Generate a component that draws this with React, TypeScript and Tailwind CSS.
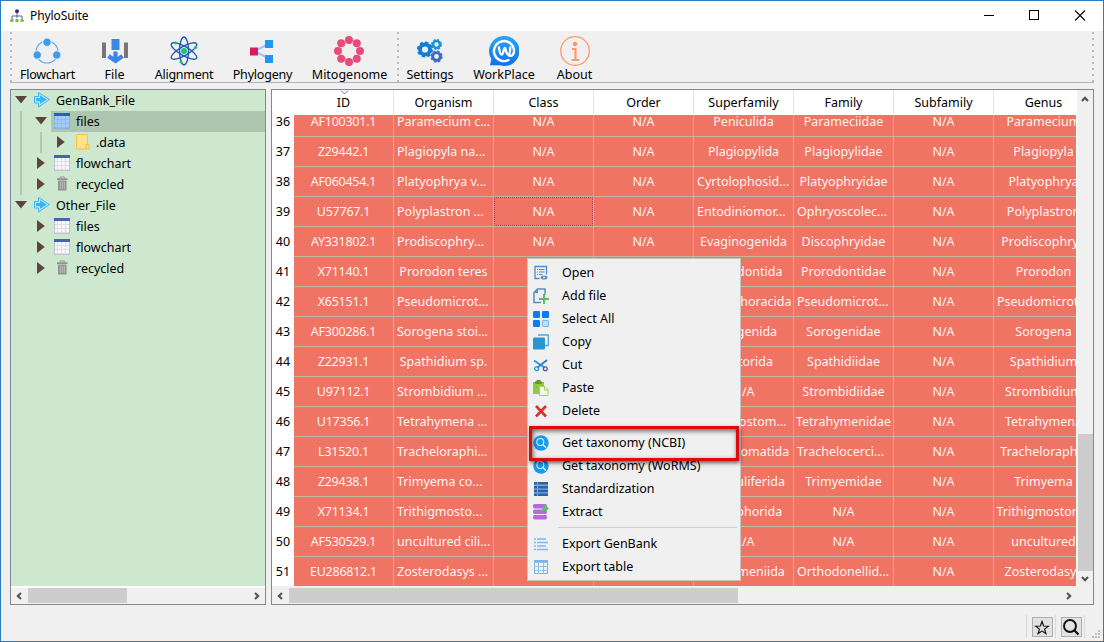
import React from "react";

type IconProps = { children: React.ReactNode; size?: string; box?: string };

function Icon({ children, size = "h-4 w-4", box = "0 0 16 16" }: IconProps) {
  return (
    <svg viewBox={box} className={`${size} shrink-0`} fill="none">
      {children}
    </svg>
  );
}

/* ---------- title bar ---------- */

function TitleBar() {
  return (
    <header className="flex h-[30px] shrink-0 items-center bg-white pl-[9px] text-[12px]">
      <svg viewBox="0 0 14 14" className="h-3.5 w-3.5" fill="none">
        <path d="M7 3v6M2 10V7h10v3" stroke="#66609a" strokeWidth="1" />
        <circle cx="7" cy="2.2" r="2" fill="#37317a" />
        <g fill="#79b94c">
          <circle cx="1.9" cy="11.5" r="1.8" />
          <circle cx="7" cy="11.5" r="1.8" />
          <circle cx="12.1" cy="11.5" r="1.8" />
        </g>
      </svg>
      <span className="ml-[6px] tracking-[-0.1px]">PhyloSuite</span>
      <div className="ml-auto flex items-center gap-[35px] pb-px pr-[17px]">
        <svg className="-mr-px h-[11px] w-[11px]" shapeRendering="crispEdges">
          <path d="M0 5.5h10" stroke="#000" />
        </svg>
        <svg className="h-[11px] w-[11px]" shapeRendering="crispEdges">
          <rect x=".5" y=".5" width="9" height="9" fill="none" stroke="#000" />
        </svg>
        <svg className="h-[11px] w-[11px]">
          <path d="M0 .5l10 10M10 .5l-10 10" stroke="#000" strokeWidth="1.1" />
        </svg>
      </div>
    </header>
  );
}

/* ---------- toolbar icons ---------- */

const flowchartIcon = (
  <Icon size="h-[30px] w-[30px]" box="0 0 30 30">
    <circle cx="15" cy="16" r="11" stroke="#5aabe8" strokeWidth="1.1" />
    <g fill="#3f9ceb" stroke="#f0f0f0" strokeWidth="1">
      <circle cx="15" cy="6.2" r="4.2" />
      <circle cx="5.2" cy="19" r="4.2" />
      <circle cx="24.8" cy="19" r="4.2" />
    </g>
  </Icon>
);

const fileIcon = (
  <Icon size="h-[30px] w-[30px]" box="0 0 30 30">
    <path d="M3 6.500h4v15.500h-4zM25 6.500h4v15.500h-4z" fill="#777" />
    <path d="M12.500 3h8v11h-8z" fill="#3d86e6" />
    <path d="M9.500 20L16.500 25L23.500 20M16.500 15.500v9" stroke="#3d86e6" strokeWidth="4.200" />
  </Icon>
);

const alignmentIcon = (
  <Icon size="h-[30px] w-[30px]" box="0 0 30 30">
    <g stroke="#2159b8" strokeWidth="1.4">
      <ellipse cx="15" cy="15" rx="4.500" ry="14" />
      <ellipse cx="15" cy="15" rx="4.500" ry="14.500" transform="rotate(60 15 15)" />
      <ellipse cx="15" cy="15" rx="4.500" ry="14.500" transform="rotate(-60 15 15)" />
    </g>
    <g fill="#19c37d">
      <circle cx="15" cy="15" r="3" />
      <circle cx="6.5" cy="6.8" r="1.6" />
      <circle cx="26.500" cy="11.500" r="1.600" />
      <circle cx="12" cy="25.800" r="1.600" />
    </g>
  </Icon>
);

const phylogenyIcon = (
  <Icon size="h-[30px] w-[30px]" box="0 0 30 30">
    <path d="M22 8L7 15l15 7.500" stroke="#90caf9" strokeWidth="2" />
    <path d="M3 11.500h8v8h-8z" fill="#d81b60" />
    <path d="M18 4h8v8h-8zM18 19h8v8h-8z" fill="#2196f3" />
  </Icon>
);

const beads = [[15, 4], [22.800, 7.200], [26, 15], [22.800, 22.800], [15, 26], [7.200, 22.800], [4, 15], [7.200, 7.200]];

const mitogenomeIcon = (
  <Icon size="h-[30px] w-[30px]" box="0 0 30 30">
    {beads.map(([x, y]) => (
      <circle key={`${x}-${y}`} cx={x} cy={y} r="4" fill="#e84a7a" />
    ))}
  </Icon>
);

function Gear({ x, y, r, color }: { x: number; y: number; r: number; color: string }) {
  return (
    <g transform={`translate(${x} ${y})`}>
      <circle r={r * 0.66} stroke={color} strokeWidth={r * 0.5} />
      <circle r={r * 0.94} stroke={color} strokeWidth={r * 0.24} strokeDasharray={`${r * 0.42} ${r * 0.318}`} />
    </g>
  );
}

const settingsIcon = (
  <Icon size="h-[30px] w-[30px]" box="0 0 30 30">
    <Gear x={10} y={13.5} r={7.6} color="#0e7ddb" />
    <Gear x={21.500} y={8.500} r={5.200} color="#1795d8" />
    <Gear x={21.500} y={20.500} r={5.800} color="#4268c0" />
  </Icon>
);

const workplaceIcon = (
  <Icon size="h-[30px] w-[30px]" box="0 0 30 30">
    <defs>
      <linearGradient id="wp" x1="0" y1="0" x2="0" y2="1">
        <stop stopColor="#29a6f5" />
        <stop offset="1" stopColor="#1070ec" />
      </linearGradient>
    </defs>
    <path d="M15 0a15 15 0 1 1-4 29.300L1 29.300l1.300-6.500A15 15 0 0 1 15 0z" fill="url(#wp)" />
    <path
      d="M19.500 24A10 10 0 1 1 25 15c0 5-4.200 6-6 3.300M10 11.500c.4 4 1.300 7 2.700 7 1.800 0 2-6.500 3.100-6.500s1.300 6.500 3.400 6.500c1.500 0 2-3 2-7"
      stroke="#fff"
      strokeWidth="2.400"
      strokeLinecap="round"
    />
  </Icon>
);

const aboutIcon = (
  <Icon size="h-[30px] w-[30px]" box="0 0 30 30">
    <circle cx="15" cy="15" r="14.300" stroke="#ff9868" strokeWidth="1.300" />
    <circle cx="15" cy="8" r="2.300" fill="#ff9868" />
    <path d="M12 13h3.500v10.500M11.500 24h7.500" stroke="#ff9868" strokeWidth="2.100" />
  </Icon>
);

const mainTools = [
  { label: "Flowchart", icon: flowchartIcon, width: "w-[66px]", text: "ml-px tracking-[-0.25px]" },
  { label: "File", icon: fileIcon, width: "w-[68px]", text: "ml-px" },
  { label: "Alignment", icon: alignmentIcon, width: "w-[72px]", text: "tracking-[-0.25px]" },
  { label: "Phylogeny", icon: phylogenyIcon, width: "w-[84px]", text: "ml-px tracking-[-0.2px]" },
  { label: "Mitogenome", icon: mitogenomeIcon, width: "w-[90px]", text: "ml-px" },
];

const sideTools = [
  { label: "Settings", icon: settingsIcon, width: "w-[64px]", text: "tracking-[-0.1px]" },
  { label: "WorkPlace", icon: workplaceIcon, width: "w-[84px]", text: "" },
  { label: "About", icon: aboutIcon, width: "w-[57px]", text: "" },
];

function ToolButton({ label, icon, width, text }: (typeof mainTools)[number]) {
  return (
    <button className={`flex shrink-0 flex-col items-center pt-[5px] ${width}`}>
      {icon}
      <span className={`mt-[1px] h-4 whitespace-nowrap leading-4 ${text}`}>{label}</span>
    </button>
  );
}

function Grip() {
  return (
    <svg className="h-[51px] w-0.5 shrink-0" shapeRendering="crispEdges">
      <path d="M1 1v50" stroke="#b9b9b9" strokeWidth="2" strokeDasharray="2 4" />
    </svg>
  );
}

function Toolbar() {
  return (
    <nav className="ml-[9px] mr-[9px] flex h-[52px] shrink-0 border-b border-[#b4b4b4]">
      <Grip />
      <div className="ml-0.5 flex">{mainTools.map((t) => <ToolButton key={t.label} {...t} />)}</div>
      <div className="ml-[3px] flex"><Grip /></div>
      <div className="-ml-px flex">{sideTools.map((t) => <ToolButton key={t.label} {...t} />)}</div>
      <div className="ml-auto flex"><Grip /></div>
    </nav>
  );
}

/* ---------- scroll bars ---------- */

function Arrow({ turn = "" }: { turn?: string }) {
  return (
    <svg viewBox="0 0 8 8" className={`h-2 w-2 shrink-0 ${turn}`} fill="none">
      <path d="M1 6l3-3.200L7 6" stroke="#505050" strokeWidth="2" />
    </svg>
  );
}

function HScroll({ thumb }: { thumb: string }) {
  return (
    <div className="mt-0.5 flex h-4 shrink-0 items-center bg-[#f0f0f0] pb-px">
      <div className="flex w-[17px] pl-[4px]"><Arrow turn="-rotate-90" /></div>
      <div className={`h-[15px] bg-[#cdcdcd] ${thumb}`} />
      <div className="ml-auto flex w-[17px] pl-[5px]"><Arrow turn="rotate-90" /></div>
    </div>
  );
}

/* ---------- tree ---------- */

const projectIcon = (
  <Icon>
    <path d="M.500 4.500h4v-4L15.500 7.500 4.500 15v-4h-4z" fill="#bfe8fb" stroke="#3fb2f4" strokeWidth="1" strokeLinejoin="round" />
    <path d="M2 6h4V3.300l6.800 4.200L6 12V9.300H2z" fill="#35b5fb" />
  </Icon>
);

function SheetIcon({ active = false }: { active?: boolean }) {
  return (
    <svg viewBox="0 0 16 16" className="h-4 w-4 shrink-0" shapeRendering="crispEdges" fill="none">
      <path d="M0 0h16v16H0z" fill={active ? "#a5ccf4" : "#f7f7fa"} />
      <path d="M3.500 3v12M7.500 3v12M11.500 3v12M1 6.500h14M1 10.500h14M1 14.500h14" stroke={active ? "#8dbdeb" : "#dfdde8"} />
      <path d="M.5 3v12.500h15V3" stroke={active ? "#80b2e4" : "#c3c1d0"} />
      <path d="M0 0h16v2.500H0z" fill={active ? "#2561b0" : "#4267ad"} />
    </svg>
  );
}

const folderIcon = (
  <Icon>
    <path d="M2.500.5h11v10h1.500v4.500H2.500z" fill="#ffe28c" stroke="#f0c34c" />
    <path d="M12 15v-4.500h1.500" stroke="#e9b93f" />
  </Icon>
);

const trashIcon = (
  <Icon>
    <path d="M6 2V1h4.500v1" stroke="#9b9b9b" />
    <path d="M3 2.300h10.500v1.700H3zM4 4.500h8.500V14.500H4z" fill="#929292" />
    <path d="M6.300 5.500v7.500M8.300 5.500v7.500M10.300 5.500v7.500" stroke="#c4cbc4" strokeWidth=".8" />
  </Icon>
);

type Node = { label: string; icon: React.ReactNode; indent: string; open?: boolean; selected?: boolean };

const nodes: Node[] = [
  { label: "GenBank_File", icon: projectIcon, indent: "", open: true },
  { label: "files", icon: <SheetIcon active />, indent: "pl-5", open: true, selected: true },
  { label: ".data", icon: folderIcon, indent: "pl-10" },
  { label: "flowchart", icon: <SheetIcon />, indent: "pl-5" },
  { label: "recycled", icon: trashIcon, indent: "pl-5" },
  { label: "Other_File", icon: projectIcon, indent: "", open: true },
  { label: "files", icon: <SheetIcon />, indent: "pl-5" },
  { label: "flowchart", icon: <SheetIcon />, indent: "pl-5" },
  { label: "recycled", icon: trashIcon, indent: "pl-5" },
];

function TreeRow({ label, icon, indent, open, selected }: Node) {
  return (
    <div className={`flex h-[21px] ${indent}`}>
      <div className="flex w-5 shrink-0 items-start justify-center pt-1">
        <svg viewBox="0 0 12 12" className="h-3 w-3">
          <path d={open ? "M0 2h12L6 9.500z" : "M2 0v12L9.800 6z"} fill="#5d4440" />
        </svg>
      </div>
      <div className={`flex flex-1 items-start pl-[3px] pt-[2px] ${selected ? "bg-[#aec5b0]" : ""}`}>
        {icon}
        <span className="ml-[6px] whitespace-nowrap leading-[17px]">{label}</span>
      </div>
    </div>
  );
}

function Tree() {
  return (
    <aside className="relative flex w-[256px] shrink-0 flex-col border border-[#828790] bg-white">
      <div className="flex-1 bg-[#cde8cf]">
        {nodes.map((n, i) => <TreeRow key={i} {...n} />)}
      </div>
      <div className="absolute left-[9px] top-[21px] h-[84px] w-0.5 bg-[#afc6b1]" />
      <div className="absolute left-[29px] top-[42px] h-[21px] w-0.5 bg-[#afc6b1]" />
      <HScroll thumb="w-[99px]" />
    </aside>
  );
}

/* ---------- table ---------- */

const columns = ["ID", "Organism", "Class", "Order", "Superfamily", "Family", "Subfamily", "Genus"];

const NA = "N/A";
const rows: string[][] = [
  ["AF100301.1", "Paramecium c...", NA, NA, "Peniculida", "Parameciidae", NA, "Paramecium"],
  ["Z29442.1", "Plagiopyla na...", NA, NA, "Plagiopylida", "Plagiopylidae", NA, "Plagiopyla"],
  ["AF060454.1", "Platyophrya v...", NA, NA, "Cyrtolophosid...", "Platyophryidae", NA, "Platyophrya"],
  ["U57767.1", "Polyplastron ...", NA, NA, "Entodiniomor...", "Ophryoscolec...", NA, "Polyplastron"],
  ["AY331802.1", "Prodiscophry...", NA, NA, "Evaginogenida", "Discophryidae", NA, "Prodiscophrya"],
  ["X71140.1", "Prorodon teres", NA, NA, "Prorodontida", "Prorodontidae", NA, "Prorodon"],
  ["X65151.1", "Pseudomicrot...", NA, NA, "Odontohoracida", "Pseudomicrot...", NA, "Pseudomicrot..."],
  ["AF300286.1", "Sorogena stoi...", NA, NA, "Sorogenida", "Sorogenidae", NA, "Sorogena"],
  ["Z22931.1", "Spathidium sp.", NA, NA, "Haptorida", "Spathidiidae", NA, "Spathidium"],
  ["U97112.1", "Strombidium ...", NA, NA, NA, "Strombidiidae", NA, "Strombidium"],
  ["U17356.1", "Tetrahymena ...", NA, NA, "Hymenostom...", "Tetrahymenidae", NA, "Tetrahymena"],
  ["L31520.1", "Tracheloraphi...", NA, NA, "Protostomatida", "Trachelocerci...", NA, "Tracheloraphis"],
  ["Z29438.1", "Trimyema co...", NA, NA, "Scutisuliferida", "Trimyemidae", NA, "Trimyema"],
  ["X71134.1", "Trithigmosto...", NA, NA, "Cyrtophorida", NA, NA, "Trithigmostoma"],
  ["AF530529.1", "uncultured cili...", NA, NA, NA, NA, NA, "uncultured"],
  ["EU286812.1", "Zosterodasys ...", NA, NA, "Synhymeniida", "Orthodonellid...", NA, "Zosterodasys"],
];

function Cell({ text, col, focused }: { text: string; col: number; focused: boolean }) {
  const elided = text.endsWith("...");
  return (
    <div
      className={`relative flex w-[100px] shrink-0 items-center overflow-hidden whitespace-nowrap border-b border-r border-[#c5b7a5] bg-[#f07464] pt-[2px] ${
        elided ? "justify-start pl-[3px]" : "justify-center"
      } ${col === 0 ? "tracking-[-0.25px]" : ""}`}
    >
      {text}
      {focused && <div className="absolute inset-0 border border-dotted border-[#4d6a68]" />}
    </div>
  );
}

function Table() {
  return (
    <main className="flex w-[823px] shrink-0 flex-col border border-[#828790] bg-white">
      <div className="flex min-h-0 flex-1">
        <div className="flex w-[804px] shrink-0 flex-col overflow-hidden">
          <div className="flex h-[25px] shrink-0 pl-[22px]">
            {columns.map((c, i) => (
              <div key={c} className="relative flex w-[100px] shrink-0 items-center justify-center border-r border-[#e2e2e2] pt-[2px]">
                {i === 0 && (
                  <svg className="absolute left-[46px] top-0 h-[5px] w-[9px]" fill="none">
                    <path d="M1 .5l3.500 3.500L8 .5" stroke="#777" />
                  </svg>
                )}
                {c}
              </div>
            ))}
          </div>
          <div className="-mb-px flex flex-1 flex-col justify-end overflow-hidden">
            {rows.map((r, i) => (
              <div key={r[0]} className="flex h-[30px] shrink-0">
                <div className="flex w-[22px] shrink-0 items-center justify-center pt-px">{36 + i}</div>
                <div className="flex text-[#fdf3f0]">
                  {r.map((t, c) => <Cell key={c} text={t} col={c} focused={i === 3 && c === 2} />)}
                </div>
              </div>
            ))}
          </div>
        </div>
        <div className="-mb-px ml-px flex w-4 flex-col items-center bg-[#f0f0f0]">
          <div className="flex h-[18px] items-center"><Arrow /></div>
          <div className="mt-auto h-[137px] w-[15px] bg-[#cdcdcd]" />
          <div className="flex h-[16px] items-center"><Arrow turn="rotate-180" /></div>
        </div>
      </div>
      <div className="flex bg-[#f0f0f0]">
        <div className="w-[805px] pt-px"><div className="-mt-px"><HScroll thumb="w-[449px]" /></div></div>
      </div>
    </main>
  );
}

/* ---------- context menu ---------- */

const lensIcon = (
  <Icon>
    <circle cx="8" cy="8" r="7.700" fill="#159cf0" />
    <circle cx="7.300" cy="7" r="3.500" stroke="#d8f2ff" strokeWidth="1.100" />
    <path d="M9.800 9.500l3.200 3.200" stroke="#d8f2ff" strokeWidth="1.300" />
  </Icon>
);

type Item = { label: string; icon: React.ReactNode };

const editItems: Item[] = [
  {
    label: "Open",
    icon: (
      <Icon>
        <path d="M6.500 13.500H2v-12h11.500v8" stroke="#4b8bd0" strokeWidth="1.300" />
        <path d="M4 4.500h1M6 4.500h5.500M4 7h1M6 7h5.500M4 9.500h1M6 9.500h3.500" stroke="#4b8bd0" />
        <ellipse cx="11" cy="12.500" rx="3.300" ry="2" fill="#4b8bd0" />
        <circle cx="11" cy="12.500" r="1" fill="#eee" />
      </Icon>
    ),
  },
  {
    label: "Add file",
    icon: (
      <Icon>
        <path d="M8 14.500H1V4.500L4.500 1H12v6" stroke="#5b8cbe" strokeWidth="1.500" />
        <path d="M1 5h4V1z" fill="#5b8cbe" />
        <path d="M11 6v10M6 11h10" stroke="#56bd62" strokeWidth="1.900" />
      </Icon>
    ),
  },
  {
    label: "Select All",
    icon: (
      <Icon>
        <g fill="#0b7cf5">
          <rect width="7" height="7" rx="1.200" />
          <rect x="9" width="7" height="7" rx="1.200" />
          <rect y="9" width="7" height="7" rx="1.200" />
        </g>
        <rect x="9.500" y="9.500" width="6" height="6" rx=".6" fill="#bee0fb" stroke="#75b5ef" />
      </Icon>
    ),
  },
  {
    label: "Copy",
    icon: (
      <Icon>
        <path d="M5 1h10.300v10.500H12" stroke="#51a7d9" strokeWidth="1.300" />
        <rect y="3.500" width="12" height="12" rx="1.200" fill="#2996d3" />
      </Icon>
    ),
  },
  {
    label: "Cut",
    icon: (
      <Icon>
        <path d="M1 3.500l10.500 7" stroke="#239ade" strokeWidth="1.800" />
        <path d="M14 3L4.500 10.500" stroke="#2d7dcc" strokeWidth="1.800" />
        <circle cx="3.600" cy="11.800" r="1.900" stroke="#219be0" strokeWidth="1.300" />
        <circle cx="12.300" cy="11.800" r="1.900" stroke="#5057ac" strokeWidth="1.300" />
      </Icon>
    ),
  },
  {
    label: "Paste",
    icon: (
      <Icon>
        <path d="M0 2h11v4H6v8H0z" fill="#91c83e" />
        <path d="M3.500 0h4v1.500H9V4H2V1.500h1.500z" fill="#64982f" />
        <path d="M6.500 6.500h5.500l3 3v6H6.500z" fill="#f5f9ed" stroke="#a2cf65" />
        <path d="M11.500 6.500V10H15" stroke="#a2cf65" />
      </Icon>
    ),
  },
  {
    label: "Delete",
    icon: (
      <Icon>
        <path d="M3 3l10 10.500M13 3L3 13.500" stroke="#d6332d" strokeWidth="2.600" />
      </Icon>
    ),
  },
];

const dataItems: Item[] = [
  { label: "Get taxonomy (NCBI)", icon: lensIcon },
  { label: "Get taxonomy (WoRMS)", icon: lensIcon },
  {
    label: "Standardization",
    icon: (
      <Icon>
        <path d="M1 1h14v14H1z" fill="#7fa8d6" />
        <path d="M1 2.200h3M1 6.200h3M1 10h3M1 13.800h3M5 2.200h10M5 6.200h10M5 10h10M5 13.800h10" stroke="#2865a8" strokeWidth="2.600" />
      </Icon>
    ),
  },
  {
    label: "Extract",
    icon: (
      <Icon>
        <g fill="#b66bdd">
          <rect y="0" width="14" height="4.500" rx="1.700" />
          <rect y="5.500" width="14" height="4.500" rx="1.700" />
          <rect y="11" width="14" height="4.500" rx="1.700" />
        </g>
        <path d="M8 7.500c1-3 2-4.500 3.500-4.700V.5L16 4.200l-3.500 3.800V6C11 6 10 6.500 8 7.500z" fill="#4ed052" />
      </Icon>
    ),
  },
];

const exportItems: Item[] = [
  {
    label: "Export GenBank",
    icon: (
      <Icon>
        <path d="M1 3h2M1 6.500h2M1 10h2M1 13.500h2M4 3h9M4 6.500h11M4 10h9M4 13.500h11" stroke="#7eb8ed" strokeWidth="1.400" />
      </Icon>
    ),
  },
  {
    label: "Export table",
    icon: (
      <svg viewBox="0 0 16 16" className="h-4 w-4 shrink-0" shapeRendering="crispEdges" fill="none">
        <path d="M1.500 1.500h13v13h-13z" fill="#e9f6ff" stroke="#7eb5e5" />
        <path d="M1 3.500h14M1 7.500h14M1 11.500h14M5.500 3v12M10.500 3v12" stroke="#8dc0ea" />
        <path d="M1 1h14v2H1z" fill="#7eb5e5" />
      </svg>
    ),
  },
];

function MenuGroup({ items }: { items: Item[] }) {
  return (
    <>
      {items.map(({ label, icon }) => (
        <div key={label} className="flex h-[23px] items-center pl-[5px]">
          {icon}
          <span className="ml-[13px] whitespace-nowrap pt-[2px]">{label}</span>
        </div>
      ))}
    </>
  );
}

function Separator() {
  return (
    <div className="flex h-[9px] items-center pl-[30px] pr-[3px]">
      <div className="h-px flex-1 bg-[#cfcfd0]" />
    </div>
  );
}

function ContextMenu() {
  return (
    <div className="absolute left-[526px] top-[257px] h-[323px] w-[214px] border border-[#c9c5c3] bg-[#f0f0f0] py-0.5">
      <MenuGroup items={editItems} />
      <Separator />
      <MenuGroup items={dataItems} />
      <Separator />
      <MenuGroup items={exportItems} />
      <div className="absolute left-px top-[167px] h-[35px] w-[210px] border-[3px] border-[#dc0c0c] shadow-[1px_2px_4px_rgba(0,0,0,0.6),inset_1px_2px_5px_rgba(0,0,0,0.6)]" />
    </div>
  );
}

/* ---------- status bar ---------- */

function StatusBar() {
  return (
    <footer className="flex flex-1 items-end justify-end pb-[3px]">
      <div className="flex h-[23px] items-center">
        <div className="h-full w-px bg-[#d9d9d9]" />
        <div className="ml-[5px] mr-[2px] flex h-5 w-[21px] items-center justify-center border border-[#adadad] bg-[#e2e2e2]">
          <svg viewBox="0 0 16 16" className="mr-px h-4 w-4 shrink-0" fill="none">
            <path d="M8 2.500l1.600 4.500 4.700.2-3.700 2.900 1.300 4.500L8 12.100l-3.900 2.500 1.300-4.500-3.700-2.900 4.700-.2z" stroke="#151515" strokeWidth="1.200" />
          </svg>
        </div>
        <div className="h-full w-px bg-[#d9d9d9]" />
        <div className="ml-[5px] mr-[2px] flex h-5 w-[21px] items-center justify-center border border-[#adadad] bg-[#e2e2e2]">
          <svg viewBox="0 0 18 18" className="mr-px h-[18px] w-[18px] shrink-0" fill="none">
            <circle cx="8" cy="8" r="6" stroke="#101010" strokeWidth="1.900" />
            <path d="M12.300 12.300l4.200 4.200" stroke="#101010" strokeWidth="2.300" />
          </svg>
        </div>
        <div className="h-full w-px bg-[#d9d9d9]" />
      </div>
      <svg className="ml-[7px] mr-[3px] h-2 w-2" shapeRendering="crispEdges">
        <path d="M6 0h2v2H6zM3 3h2v2H3zM6 3h2v2H6zM0 6h2v2H0zM3 6h2v2H3zM6 6h2v2H6z" fill="#bdbdbd" />
      </svg>
    </footer>
  );
}

export default function App() {
  return (
    <div className="relative flex h-[642px] w-[1104px] flex-col overflow-hidden border border-[#2c7dbd] bg-[#f0f0f0] font-['Noto_Sans','Noto_Sans_CJK_SC',sans-serif] text-[12.5px] text-black">
      <TitleBar />
      <Toolbar />
      <div className="ml-[9px] mt-[6px] flex h-[516px] shrink-0 gap-[5px]">
        <Tree />
        <Table />
      </div>
      <StatusBar />
      <ContextMenu />
    </div>
  );
}
